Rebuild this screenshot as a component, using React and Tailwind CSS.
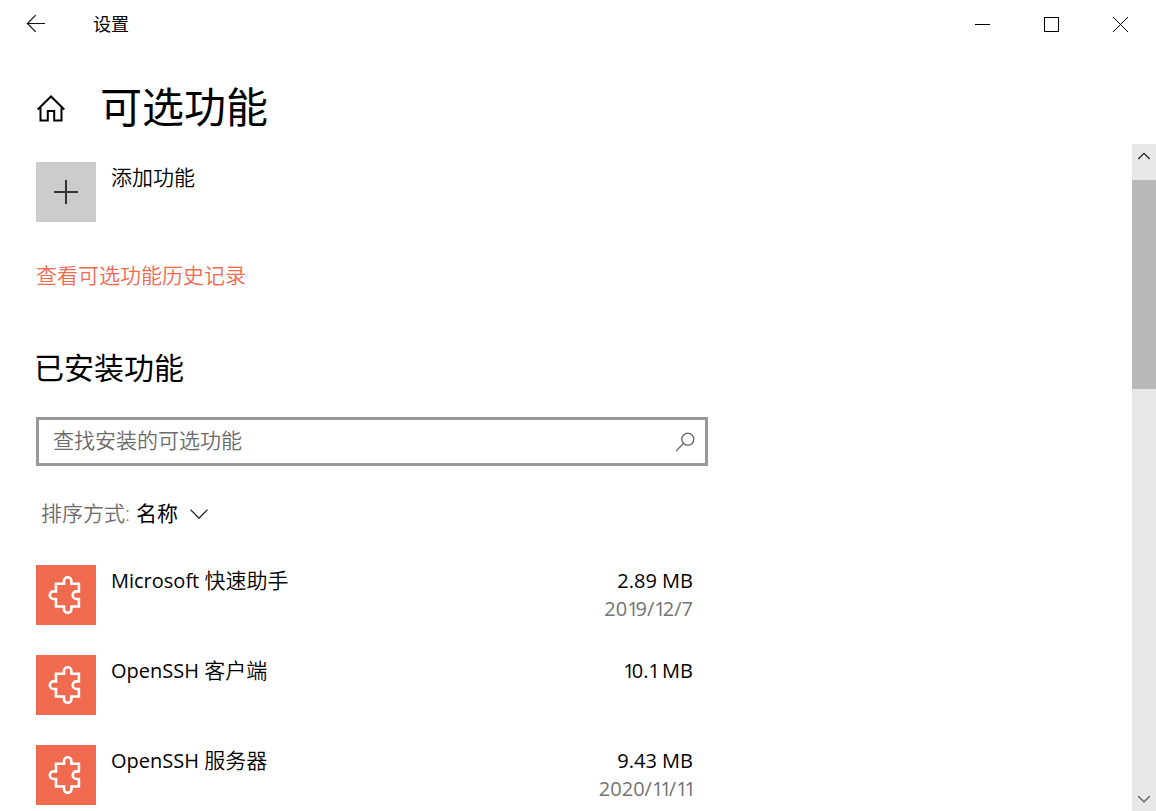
import React from "react";

const features = [
  { latin: "Microsoft", name: "快速助手", size: "2.89 MB", date: "2019/12/7" },
  { latin: "OpenSSH", name: "客户端", size: "10.1 MB", date: "" },
  { latin: "OpenSSH", name: "服务器", size: "9.43 MB", date: "2020/11/11" },
];

function PuzzleIcon() {
  return (
    <svg width="60" height="60" viewBox="0 0 60 60" fill="none" stroke="#fff" strokeWidth="2.6">
      <path d="M20 18.8H28V16a3.7 3.7 0 0 1 7.4 0V18.8H42.9V26.4H40.5a3.8 3.8 0 0 0 0 7.6H42.9V41.5H35.4V44.2a3.7 3.7 0 0 1-7.4 0V41.5H20V34H17.6a3.8 3.8 0 0 1 0-7.6H20Z" />
    </svg>
  );
}

function TitleBar() {
  return (
    <header className="flex h-12 shrink-0 items-center">
      <svg className="ml-[26px]" width="20" height="20" viewBox="0 0 20 20" fill="none" stroke="#111" strokeWidth="1.2">
        <path d="M19 9.5H1.5M9.7 1.2L1.4 9.5L9.7 17.8" />
      </svg>
      <span className="ml-[47px] text-[18px] leading-[24px]">设置</span>
      <div className="mr-[28px] ml-auto flex items-center gap-[54px] text-black">
        <svg width="15" height="15" viewBox="0 0 15 15" stroke="currentColor" shapeRendering="crispEdges">
          <path d="M0 7.5H15" />
        </svg>
        <svg width="15" height="15" viewBox="0 0 15 15" fill="none" stroke="currentColor" shapeRendering="crispEdges">
          <path d="M.5 .5H14.5V14.5H.5Z" />
        </svg>
        <svg width="15" height="15" viewBox="0 0 15 15" stroke="currentColor">
          <path d="M0 0L15 15M15 0L0 15" />
        </svg>
      </div>
    </header>
  );
}

function Scrollbar() {
  return (
    <div className="flex w-6 shrink-0 flex-col bg-[#e8e8e8]">
      <svg className="h-9 w-6 shrink-0" viewBox="0 0 24 36" fill="none" stroke="#222" strokeWidth="1.3">
        <path d="M6.3 15L12 9.3L17.7 15" />
      </svg>
      <div className="h-[209px] bg-[#b9b9b9]" />
      <svg className="mt-auto h-6 w-6 shrink-0" viewBox="0 0 24 24" fill="none" stroke="#555" strokeWidth="1.3">
        <path d="M6.3 9.2L12 14.9L17.7 9.2" />
      </svg>
    </div>
  );
}

// Sets the digit 1 tighter than the other figures.
function Figures({ text }) {
  return text.split(/(1)/).map((part, i) =>
    part === "1" ? (
      <span key={i} className="tracking-[-3px]">
        1
      </span>
    ) : (
      part
    ),
  );
}

function FeatureRow({ latin, name, size, date }) {
  return (
    <li className="flex h-[60px]">
      <div className="h-[60px] w-[60px] shrink-0 bg-[#f06a50]">
        <PuzzleIcon />
      </div>
      <span className="ml-[15px] pt-px leading-[28px]">
        {latin} <span className="text-[21px] font-[350]">{name}</span>
      </span>
      <div className="mr-[15px] ml-auto pt-[2px] text-right leading-[28px]">
        <div>
          <Figures text={size} />
        </div>
        <div className="text-[#737373]">
          <Figures text={date} />
        </div>
      </div>
    </li>
  );
}

export default function App() {
  return (
    <div className="flex h-[811px] w-[1156px] flex-col overflow-hidden bg-white font-['Open_Sans','Noto_Sans_CJK_SC',sans-serif] text-[20px] font-normal whitespace-nowrap text-black">
      <TitleBar />
      <div className="flex h-24 shrink-0 items-center pt-[22px] pl-[36px]">
        <svg className="mt-[4px]" width="30" height="30" viewBox="0 0 30 30" fill="none" stroke="#000" strokeWidth="2">
          <path d="M1.7 15.5L15 2.5L28.3 15.5M4.5 13V26.5H11.8V17H18.2V26.5H25.5V13" />
        </svg>
        <h1 className="ml-[34px] text-[42px] leading-[56px]">可选功能</h1>
      </div>
      <div className="flex min-h-0 flex-1">
        <main className="flex min-w-0 flex-1 flex-col items-start overflow-hidden pl-[36px]">
          <button className="mt-[18px] flex h-[60px] shrink-0 text-left text-[21px]">
            <span className="h-[60px] w-[60px] bg-[#ccc]">
              <svg width="60" height="60" viewBox="0 0 60 60" stroke="#333" strokeWidth="2">
                <path d="M18 30H42M30 18V42" />
              </svg>
            </span>
            <span className="ml-[15px] pt-px leading-[28px] font-[350]">添加功能</span>
          </button>
          <a className="mt-[39px] shrink-0 text-[21px] leading-[28px] font-[350] text-[#f06a50]">查看可选功能历史记录</a>
          <h2 className="-ml-[2px] mt-[59px] shrink-0 text-[30px] leading-[40px]">已安装功能</h2>
          <div className="mt-[29px] flex h-[49px] w-[672px] shrink-0 items-center border-3 border-[#999] pb-[2px] pl-[14px]">
            <span className="-mt-[2px] text-[21px] leading-[28px] font-[350] text-[#6b6b6b]">查找安装的可选功能</span>
            <svg className="mt-[2px] mr-[10px] ml-auto" width="20" height="20" viewBox="0 0 20 20" fill="none" stroke="#666" strokeWidth="1.3">
              <circle cx="12.8" cy="7.2" r="6" />
              <path d="M8.5 11.5L1 19" />
            </svg>
          </div>
          <div className="mt-[33px] ml-[5px] flex h-[28px] shrink-0 items-center text-[21px] leading-[28px] font-[350]">
            <span className="text-[#6b6b6b]">排序方式:</span>
            <span className="ml-[6px] font-normal">名称</span>
            <svg className="mt-px ml-[12px]" width="18" height="10" viewBox="0 0 18 10" fill="none" stroke="#111" strokeWidth="1.2">
              <path d="M.5 .7L9 9.2L17.5 .7" />
            </svg>
          </div>
          <ul className="mt-[38px] flex w-[672px] shrink-0 flex-col gap-[30px]">
            {features.map((f) => (
              <FeatureRow key={f.name} {...f} />
            ))}
          </ul>
        </main>
        <Scrollbar />
      </div>
    </div>
  );
}
